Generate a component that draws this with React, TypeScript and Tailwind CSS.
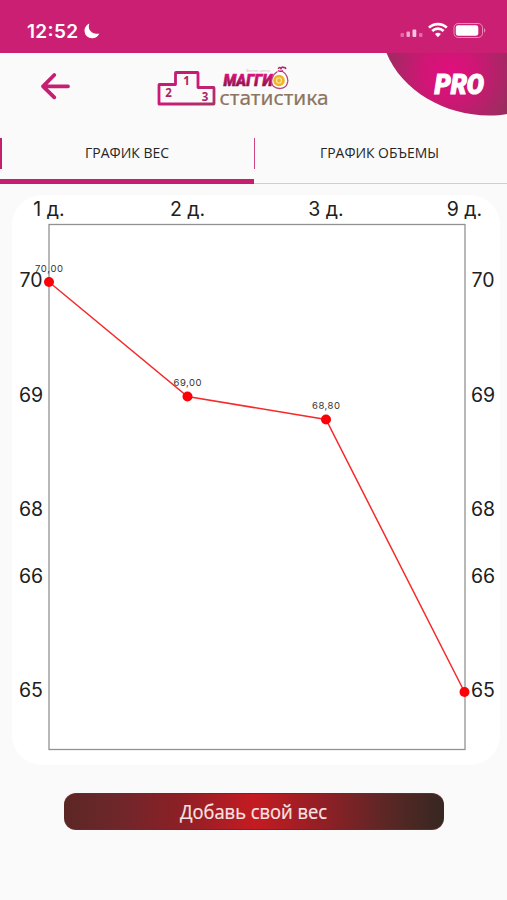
const points = [
  { day: "1 д.", x: 37, y: 87, label: "70,00" },
  { day: "2 д.", x: 175.5, y: 201.5, label: "69,00" },
  { day: "3 д.", x: 314, y: 224.5, label: "68,80" },
  { day: "9 д.", x: 452.5, y: 497, label: "" },
];

const ticks = [
  { value: "70", y: 85 },
  { value: "69", y: 200 },
  { value: "68", y: 314 },
  { value: "66", y: 381 },
  { value: "65", y: 495 },
];

const StatusBar = () => (
  <div className="flex h-[53px] shrink-0 items-center justify-between bg-[#cb1f73] pl-[27px] pr-5 pt-[9px] text-white">
    <div className="flex items-center gap-[5px]">
      <svg width="52" height="20">
        <text x="0" y="16.500" fill="currentColor" fontSize="19" fontWeight="600" textLength="51">
          12:52
        </text>
      </svg>
      <svg width="16" height="16" viewBox="0 0 16 16" fill="currentColor">
        <path d="M5.500.500C3 1.500.500 4.300.500 7.800a7.500 7.500 0 0 0 7.700 7.500c3.400 0 6-2 7.100-4.800-1 .3-2 .4-3 .3C8 10.300 5 7.500 4.800 3.700c0-1.200.2-2.200.7-3.200z" />
      </svg>
    </div>
    <svg width="88" height="18" viewBox="0 0 88 18" fill="none">
      <g fill="#fff">
        <rect x="1.500" y="11" width="3.500" height="4" rx="1" opacity=".35" />
        <rect x="7.500" y="9.500" width="3.500" height="5.500" rx="1" opacity=".6" />
        <rect x="13.500" y="7.500" width="3.800" height="7.500" rx="1" opacity=".75" />
        <rect x="20" y="11" width="3.500" height="4" rx="1" opacity=".35" />
      </g>
      <g stroke="#fff" strokeWidth="2.700">
        <path d="M30 5.600c4.900-4.700 12.900-4.700 17.800 0" />
        <path d="M33.200 9c3.300-3.100 8.100-3.100 11.400 0" />
      </g>
      <path d="M36 12c1.700-1.600 4.200-1.600 5.900 0l-3 3.200z" fill="#fff" />
      <rect x="55" y="1.500" width="28.500" height="14" rx="4.200" stroke="#e68fb9" />
      <rect x="56.800" y="3.200" width="22.500" height="10.600" rx="2.400" fill="#fff" />
      <path d="M85 6.300c1.700.6 1.700 3.800 0 4.400z" fill="#e68fb9" />
    </svg>
  </div>
);

const Logo = () => (
  <svg width="180" height="50" viewBox="0 0 180 50" className="ml-[83px] mt-[9px]">
    <defs>
      <linearGradient id="podium" x1="0" x2="1" y1="0" y2="1">
        <stop offset="0" stopColor="#a82b64" />
        <stop offset=".4" stopColor="#d3157d" />
        <stop offset="1" stopColor="#a83464" />
      </linearGradient>
      <linearGradient id="brand" x1="0" x2="0" y1="0" y2="1">
        <stop offset=".2" stopColor="#df117f" />
        <stop offset=".9" stopColor="#7d1646" />
      </linearGradient>
    </defs>
    <path
      d="M6 42V23q0-.500.500-.500H22.500V11q0-.500.500-.500H44.500q.500 0 .500.500V25.500H60.500q.500 0 .500.500V41.500q0 .500-.500.500z"
      fill="none"
      stroke="url(#podium)"
      strokeWidth="2.800"
      strokeLinejoin="round"
    />
    <g fill="#ae2462" fontFamily="Open Sans, sans-serif" fontWeight="700" fontSize="11.500" textAnchor="middle">
      <text x="33.500" y="23">1</text>
      <text x="15.500" y="34.500">2</text>
      <text x="52" y="38.500">3</text>
    </g>
    <text x="93" y="9.500" fontFamily="Open Sans, sans-serif" fontSize="3.500" fill="#bbb" textLength="24" lengthAdjust="spacingAndGlyphs">
      Фитнес центр
    </text>
    <text
      x="70.500"
      y="23.800"
      fontFamily="Roboto, sans-serif"
      fontSize="17"
      fontWeight="900"
      fontStyle="italic"
      fill="url(#brand)"
      stroke="url(#brand)"
      strokeWidth=".7"
      textLength="49"
      lengthAdjust="spacingAndGlyphs"
    >
      МАГГИ
    </text>
    <g fill="none">
      <path d="M124.500 9.500c-5 3-8 10.500-4 14.800 4 3.500 11.500 2.700 13.500-2 2.200-5-.500-10.800-4.500-12.800" fill="#fff" stroke="#b44878" strokeWidth="1.300" />
      <circle cx="126" cy="18.500" r="5.800" fill="#efb526" />
      <circle cx="126" cy="18.500" r="2.500" stroke="#fbe6a0" strokeWidth="1.200" />
      <path d="M125 8.500q2 1.500 5 .2" stroke="#d3157d" strokeWidth="1.500" />
      <path d="M125.500 6.200q1.500-1.500 2.500.3 1-2.200 3-.8 1.500-.6 1.600.8" stroke="#a82b61" strokeWidth="1.600" strokeLinecap="round" />
    </g>
    <text x="66.500" y="43" fontFamily="Noto Sans, sans-serif" fontSize="20.500" fill="#8b7560" stroke="#8b7560" strokeWidth=".2" textLength="109" lengthAdjust="spacingAndGlyphs">
      статистика
    </text>
  </svg>
);

const ProBadge = () => (
  <svg width="122" height="64" viewBox="0 0 122 64" className="ml-auto">
    <defs>
      <radialGradient id="pro" gradientUnits="userSpaceOnUse" cx="64" cy="20" r="72">
        <stop offset="0" stopColor="#df0f7d" />
        <stop offset=".35" stopColor="#d11576" />
        <stop offset="1" stopColor="#93305c" />
      </radialGradient>
    </defs>
    <path d="M1.500 0C17 38 60 62.500 104 62.500c7 0 12-.5 18-1.500V0z" fill="url(#pro)" />
    <text
      x="49.500"
      y="40.500"
      fontFamily="Roboto, sans-serif"
      fontSize="28"
      fontWeight="900"
      fontStyle="italic"
      fill="#fff"
      stroke="#fff"
      strokeWidth="1.200"
      textLength="49.500"
      lengthAdjust="spacingAndGlyphs"
    >
      PRO
    </text>
  </svg>
);

const Header = () => (
  <header className="flex h-[72px] shrink-0 items-start">
    <svg width="30" height="28" viewBox="0 0 30 28" className="ml-10 mt-[19px]" fill="none" stroke="#c51f74" strokeWidth="3.800" strokeLinecap="round" strokeLinejoin="round">
      <path d="M28 14.300H3M14.300 3L3 14.300l11.300 11" />
    </svg>
    <Logo />
    <ProBadge />
  </header>
);

const Tabs = () => (
  <nav className="grid h-[59px] shrink-0 grid-cols-2 font-['Open_Sans',sans-serif] text-[14px] text-[#252525]">
    <div className="border-b-[5px] border-[#c51f70] pt-[13px]">
      <div className="flex h-[31px] items-center justify-center border-l-2 border-[#c51f70]">
        <svg width="86" height="22">
          <text x="0" y="15" fill="currentColor" textLength="84" lengthAdjust="spacingAndGlyphs">
            ГРАФИК ВЕС
          </text>
        </svg>
      </div>
    </div>
    <div className="border-b border-[#cfcfcf] pt-[13px]">
      <div className="flex h-[31px] items-center justify-center border-l border-[#d0447f]">
        <svg width="121" height="22">
          <text x="0" y="15" fill="currentColor" textLength="119" lengthAdjust="spacingAndGlyphs">
            ГРАФИК ОБЪЕМЫ
          </text>
        </svg>
      </div>
    </div>
  </nav>
);

const WeightChart = () => (
  <div className="ml-3 mt-[11px] h-[570px] w-[488px] shrink-0 rounded-[30px] bg-white">
    <svg width="488" height="570" viewBox="0 0 488 570" className="overflow-visible" fontFamily="Inter, sans-serif">
      <rect x="37" y="29.500" width="416" height="525" fill="none" stroke="#929292" strokeWidth="1.300" />
      <g fontSize="19.500" fill="#202020" textAnchor="middle">
        {points.map((p) => (
          <text key={p.day} x={p.x} y="20.500">
            {p.day}
          </text>
        ))}
        {ticks.map((t) => (
          <g key={t.value}>
            <text x="19" y={t.y + 7}>{t.value}</text>
            <text x="471" y={t.y + 7}>{t.value}</text>
          </g>
        ))}
      </g>
      <polyline points={points.map((p) => `${p.x},${p.y}`).join(" ")} fill="none" stroke="#f52a2a" strokeWidth="1.500" />
      {points.map((p) => (
        <g key={p.day}>
          <circle cx={p.x} cy={p.y} r="5" fill="#fb0007" />
          {p.label && (
            <text x={p.x - 14} y={p.y - 10.500} fontSize="9.500" fill="#333" textLength="28">
              {p.label}
            </text>
          )}
        </g>
      ))}
    </svg>
  </div>
);

export default function App() {
  return (
    <div className="flex h-[900px] w-[507px] flex-col overflow-hidden bg-[#fafafa] font-['Inter',sans-serif]">
      <StatusBar />
      <Header />
      <Tabs />
      <WeightChart />
      <button className="ml-16 mt-7 flex h-[37px] w-[380px] shrink-0 items-center justify-center rounded-xl border-y border-[#70282a] bg-[linear-gradient(90deg,#5b2725_0%,#70262a_15%,#8b2026_30%,#c51b22_50%,#8b2026_70%,#5b2725_85%,#362722_100%)] text-white">
        <svg width="152" height="34" className="overflow-visible">
          <text x="2" y="24" fill="#f8e5e5" stroke="#f8e5e5" strokeWidth=".2" fontFamily="Open Sans, sans-serif" fontSize="20" textLength="147" lengthAdjust="spacingAndGlyphs">
            Добавь свой вес
          </text>
        </svg>
      </button>
    </div>
  );
}
